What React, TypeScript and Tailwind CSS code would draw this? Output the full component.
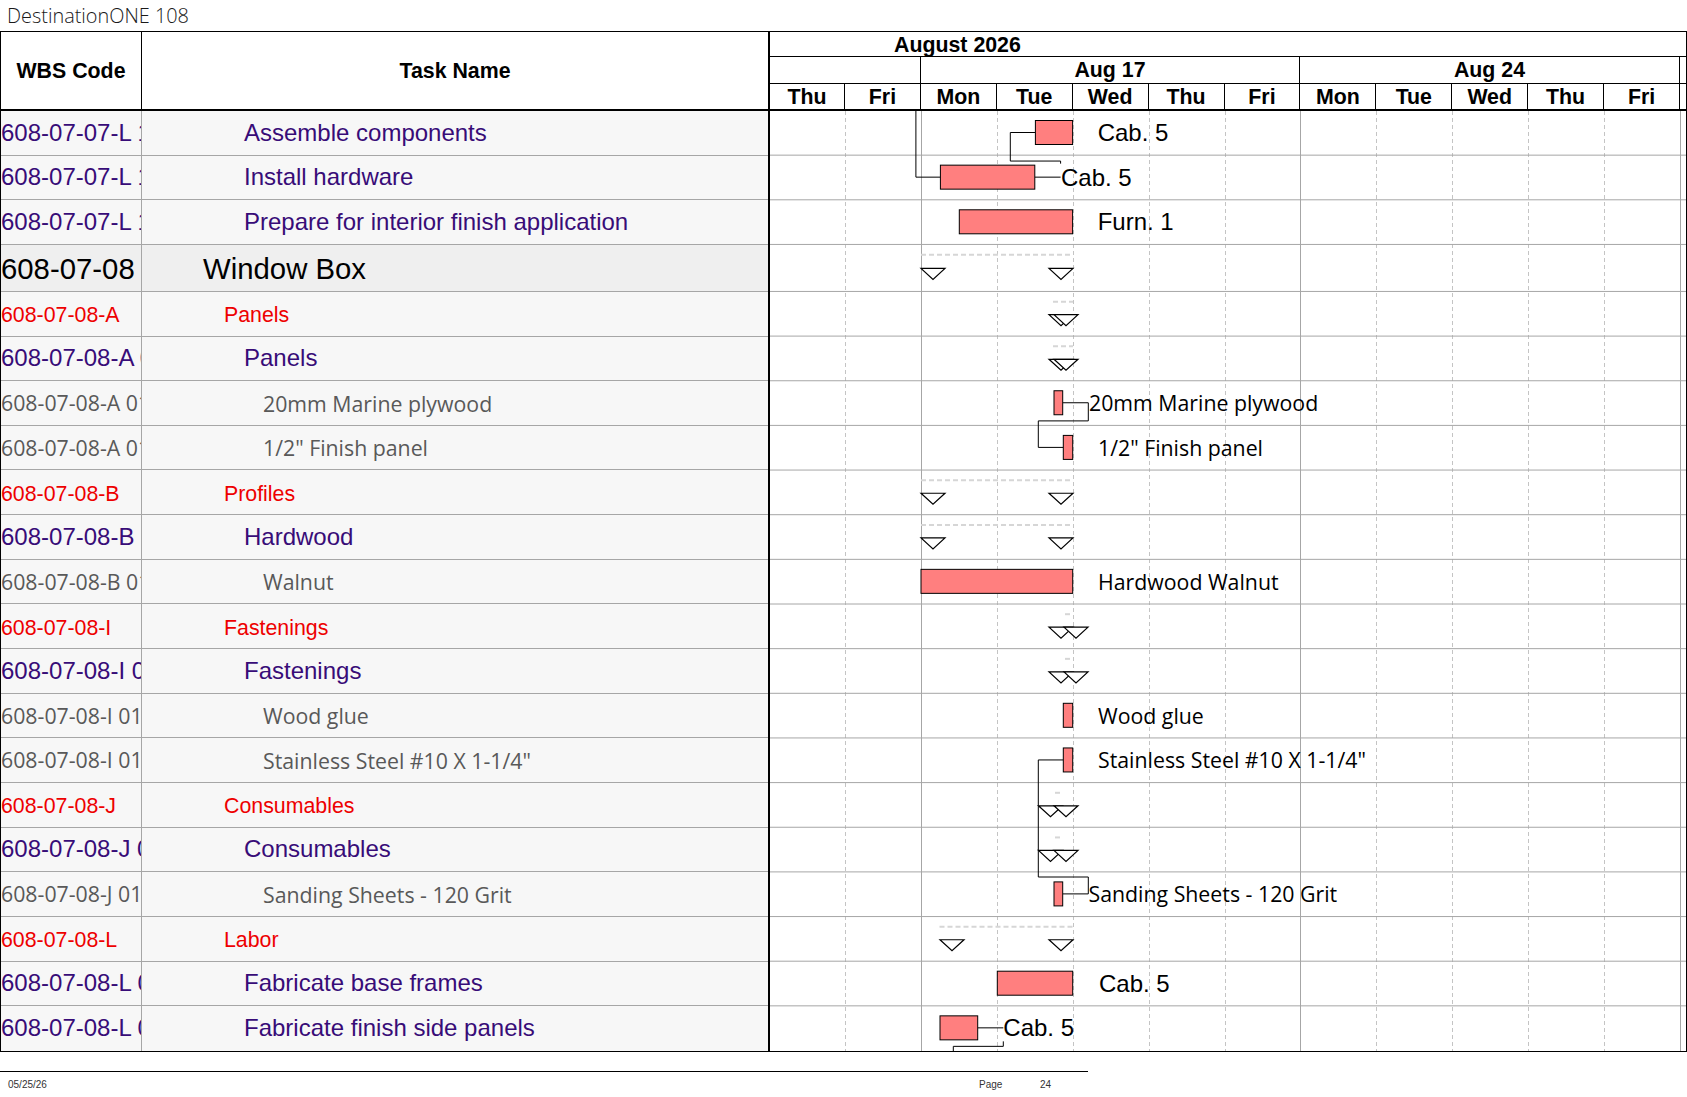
import React from "react";

type Kind = "purple" | "group" | "red" | "item";

type Row = { wbs: string; name: string; kind: Kind };

type Bar = { t: "bar"; x1: number; x2: number; label: string; lx: number; arial?: boolean };
type Sum = { t: "sum"; d1: number; d2: number; tris: number[] };

const rows: Row[] = [
  { wbs: "608-07-07-L 1", name: "Assemble components", kind: "purple" },
  { wbs: "608-07-07-L 1", name: "Install hardware", kind: "purple" },
  { wbs: "608-07-07-L 1", name: "Prepare for interior finish application", kind: "purple" },
  { wbs: "608-07-08", name: "Window Box", kind: "group" },
  { wbs: "608-07-08-A", name: "Panels", kind: "red" },
  { wbs: "608-07-08-A 01", name: "Panels", kind: "purple" },
  { wbs: "608-07-08-A 01 01", name: "20mm Marine plywood", kind: "item" },
  { wbs: "608-07-08-A 01 02", name: '1/2" Finish panel', kind: "item" },
  { wbs: "608-07-08-B", name: "Profiles", kind: "red" },
  { wbs: "608-07-08-B 01", name: "Hardwood", kind: "purple" },
  { wbs: "608-07-08-B 01 01", name: "Walnut", kind: "item" },
  { wbs: "608-07-08-I", name: "Fastenings", kind: "red" },
  { wbs: "608-07-08-I 01", name: "Fastenings", kind: "purple" },
  { wbs: "608-07-08-I 01 01", name: "Wood glue", kind: "item" },
  { wbs: "608-07-08-I 01 02", name: 'Stainless Steel #10 X 1-1/4"', kind: "item" },
  { wbs: "608-07-08-J", name: "Consumables", kind: "red" },
  { wbs: "608-07-08-J 01", name: "Consumables", kind: "purple" },
  { wbs: "608-07-08-J 01 01", name: "Sanding Sheets - 120 Grit", kind: "item" },
  { wbs: "608-07-08-L", name: "Labor", kind: "red" },
  { wbs: "608-07-08-L 01", name: "Fabricate base frames", kind: "purple" },
  { wbs: "608-07-08-L 02", name: "Fabricate finish side panels", kind: "purple" },
];

// one entry per row, real page coordinates
const gantt: (Bar | Sum)[] = [
  { t: "bar", x1: 1035.4, x2: 1072.6, label: "Cab. 5", lx: 1097.7, arial: true },
  { t: "bar", x1: 940.4, x2: 1034.8, label: "Cab. 5", lx: 1061, arial: true },
  { t: "bar", x1: 959.3, x2: 1072.6, label: "Furn. 1", lx: 1097.7, arial: true },
  { t: "sum", d1: 921, d2: 1073, tris: [921, 1049] },
  { t: "sum", d1: 1053, d2: 1073, tris: [1049, 1054] },
  { t: "sum", d1: 1053, d2: 1073, tris: [1049, 1054] },
  { t: "bar", x1: 1054, x2: 1062.7, label: "20mm Marine plywood", lx: 1089 },
  { t: "bar", x1: 1063.3, x2: 1072.7, label: '1/2" Finish panel', lx: 1098 },
  { t: "sum", d1: 921, d2: 1073, tris: [921, 1049] },
  { t: "sum", d1: 921, d2: 1073, tris: [921, 1049] },
  { t: "bar", x1: 921, x2: 1072.7, label: "Hardwood Walnut", lx: 1098 },
  { t: "sum", d1: 1065, d2: 1072, tris: [1049, 1064] },
  { t: "sum", d1: 1065, d2: 1072, tris: [1049, 1064] },
  { t: "bar", x1: 1063.3, x2: 1072.7, label: "Wood glue", lx: 1098 },
  { t: "bar", x1: 1063.3, x2: 1072.7, label: 'Stainless Steel #10 X 1-1/4"', lx: 1098 },
  { t: "sum", d1: 1055, d2: 1062, tris: [1038.5, 1054] },
  { t: "sum", d1: 1055, d2: 1062, tris: [1038.5, 1054] },
  { t: "bar", x1: 1054, x2: 1062.7, label: "Sanding Sheets - 120 Grit", lx: 1088.5 },
  { t: "sum", d1: 939.5, d2: 1072.7, tris: [940, 1049] },
  { t: "bar", x1: 997.3, x2: 1072.7, label: "Cab. 5", lx: 1099, arial: true },
  { t: "bar", x1: 940, x2: 977.7, label: "Cab. 5", lx: 1003.3, arial: true },
];

const ROW_H = 44.65;
const GROUP_H = 47;
const TOP = 111;
const rowTop = (i: number) => TOP + i * ROW_H + (i > 3 ? GROUP_H - ROW_H : 0);
const mid = (i: number) => rowTop(i) + 21.5;

const days = ["Thu", "Fri", "Mon", "Tue", "Wed", "Thu", "Fri", "Mon", "Tue", "Wed", "Thu", "Fri"];
const DAY_W = 75.92;
const weekLines = [921, 1300, 1680];

const wbsCls: Record<Kind, string> = {
  purple: "font-['Liberation_Sans',Arial,sans-serif] text-[24px] text-[#380c78]",
  red: "pt-[5px] font-['Liberation_Sans',Arial,sans-serif] text-[21.33px] text-[#ee0000]",
  item: "font-['Open_Sans',sans-serif] text-[21.3px] text-[#595959]",
  group: "pt-[2px] font-['Liberation_Sans',Arial,sans-serif] text-[29.33px] text-black",
};

const nameCls: Record<Kind, string> = {
  purple: "pl-[102px] font-['Liberation_Sans',Arial,sans-serif] text-[24px] text-[#380c78]",
  red: "pl-[82px] pt-[5px] font-['Liberation_Sans',Arial,sans-serif] text-[21.33px] text-[#ee0000]",
  item: "pl-[121px] pt-[1px] font-['Open_Sans',sans-serif] text-[21.3px] text-[#595959]",
  group: "pl-[61px] pt-[2px] font-['Liberation_Sans',Arial,sans-serif] text-[29.33px] text-black",
};

function Tri({ x, y }: { x: number; y: number }) {
  return (
    <polygon
      points={`${x},${y} ${x + 24},${y} ${x + 12},${y + 11}`}
      fill="#fff"
      stroke="#000"
      strokeWidth={1.2}
    />
  );
}

function GanttBody() {
  const bottom = rowTop(rows.length);
  return (
    <svg width={916} height={940} viewBox="770 111 916 940" className="block">
      {/* day grid */}
      {days.map((_, i) => {
        const x = Math.round(769 + DAY_W * (i + 1)) + 0.5;
        const solid = weekLines.some((w) => Math.abs(w - x) < 2);
        return (
          <line
            key={i}
            x1={x}
            x2={x}
            y1={111}
            y2={bottom}
            stroke={solid ? "#a6a6a6" : "#c4c4c4"}
            strokeWidth={1}
            strokeDasharray={solid ? undefined : "4 3"}
          />
        );
      })}
      {/* row lines */}
      {rows.slice(0, -1).map((_, i) => (
        <line key={i} x1={770} x2={1686} y1={rowTop(i + 1) - 0.5} y2={rowTop(i + 1) - 0.5} stroke="#a6a6a6" strokeWidth={1} />
      ))}

      {/* links */}
      <g fill="none" stroke="#000" strokeWidth={1}>
        <polyline points={`915.9,111 915.9,${mid(1)} 940.4,${mid(1)}`} />
        <polyline
          points={`1035.4,${mid(0)} 1010.3,${mid(0)} 1010.3,${rowTop(1) + 5.4} 1060.6,${rowTop(1) + 5.4} 1060.6,${rowTop(1) + 8}`}
        />
        <polyline points={`1034.8,${mid(1)} 1060.6,${mid(1)}`} />
        <polyline
          points={`1062.7,${mid(6)} 1088.3,${mid(6)} 1088.3,${rowTop(7) - 5} 1038.3,${rowTop(7) - 5} 1038.3,${mid(7)} 1063.3,${mid(7)}`}
        />
        <polyline
          points={`1063.3,${mid(14)} 1038.3,${mid(14)} 1038.3,${rowTop(17) + 4.6} 1088.3,${rowTop(17) + 4.6} 1088.3,${mid(17)} 1062.7,${mid(17)}`}
        />
        <polyline points={`977.7,${mid(20)} 1003.3,${mid(20)}`} />
        <polyline
          points={`953.3,${bottom} 953.3,${rowTop(20) + 40} 1003.3,${rowTop(20) + 40} 1003.3,${rowTop(20) + 35}`}
        />
      </g>

      {gantt.map((g, i) => {
        const y = rowTop(i);
        if (g.t === "sum") {
          const ty = y + (i === 3 ? 23.5 : 22.7);
          return (
            <g key={i}>
              <line
                x1={g.d1}
                x2={g.d2}
                y1={y + 9.7}
                y2={y + 9.7}
                stroke="#d6d6d6"
                strokeWidth={2}
                strokeDasharray="5 3"
              />
              {g.tris.map((tx, k) => (
                <Tri key={k} x={tx} y={ty} />
              ))}
            </g>
          );
        }
        return (
          <g key={i}>
            <rect
              x={g.x1}
              y={y + 9.5}
              width={g.x2 - g.x1}
              height={24}
              fill="#ff7f7f"
              stroke="#000"
              strokeWidth={1}
            />
            <text
              x={g.lx}
              y={y + 30}
              fill="#000"
              fontFamily={g.arial ? "'Liberation Sans', Arial, sans-serif" : "'Open Sans', sans-serif"}
              fontSize={g.arial ? 24 : 21.3}
            >
              {g.label}
            </text>
          </g>
        );
      })}
    </svg>
  );
}

export default function App() {
  return (
    <div className="w-[1687px] bg-white font-['Liberation_Sans',Arial,sans-serif] text-black">
      <div className="h-[31px] pl-[7px] pt-[1px] font-['Open_Sans',sans-serif] text-[19.9px] font-light leading-normal text-[#1a1a1a]">
        DestinationONE 108
      </div>

      <div className="border border-black">
        {/* header */}
        <div className="flex h-[79px] border-b-2 border-black">
          <div className="flex w-[141px] items-center justify-center border-r border-black pt-[2px] text-[21.33px] font-bold">
            WBS Code
          </div>
          <div className="flex w-[626px] items-center justify-center pt-[2px] text-[21.33px] font-bold">Task Name</div>
          <div className="flex w-[918px] flex-col border-l-2 border-black text-[21.33px] font-bold">
            <div className="h-[25px] border-b border-black pl-[124px] leading-[26px]">August 2026</div>
            <div className="flex h-[27px] border-b border-black">
              <div className="w-[151px] border-r border-black" />
              <div className="flex w-[379px] items-center justify-center border-r border-black pt-[2px]">Aug 17</div>
              <div className="flex w-[380px] items-center justify-center border-r border-black pt-[2px]">Aug 24</div>
              <div className="flex-1" />
            </div>
            <div className="flex h-[25px]">
              {days.map((d, i) => (
                <div
                  key={i}
                  className={
                    i === 0
                      ? "flex w-[75px] shrink-0 items-center justify-center border-r border-black pt-[2px]"
                      : "flex w-[75.92px] shrink-0 items-center justify-center border-r border-black pt-[2px]"
                  }
                >
                  {d}
                </div>
              ))}
              <div className="flex-1" />
            </div>
          </div>
        </div>

        {/* body */}
        <div className="flex">
          <div className="flex w-[767px] flex-col bg-[#f7f7f7]">
            {rows.map((r, i) => (
              <div
                key={i}
                className={[
                  "flex",
                  r.kind === "group" ? "h-[47px] bg-[#efefef]" : "h-[44.65px]",
                  i < rows.length - 1 ? "border-b border-[#a6a6a6]" : "",
                ].join(" ")}
              >
                <div
                  className={`flex w-[141px] shrink-0 items-center overflow-hidden whitespace-nowrap border-r border-[#a6a6a6] leading-normal ${wbsCls[r.kind]}`}
                >
                  {r.wbs}
                </div>
                <div className={`flex flex-1 items-center whitespace-nowrap leading-normal ${nameCls[r.kind]}`}>
                  {r.name}
                </div>
              </div>
            ))}
          </div>
          <div className="w-[918px] border-l-2 border-black bg-white">
            <GanttBody />
          </div>
        </div>
      </div>

      {/* page footer */}
      <div className="mt-[19px] w-[1088px] border-t border-black">
        <div className="flex pl-[8px] pt-[7px] text-[10px] leading-[12px] text-[#333]">
          <span className="w-[971px]">05/25/26</span>
          <span className="w-[61px]">Page</span>
          <span>24</span>
        </div>
      </div>
    </div>
  );
}
